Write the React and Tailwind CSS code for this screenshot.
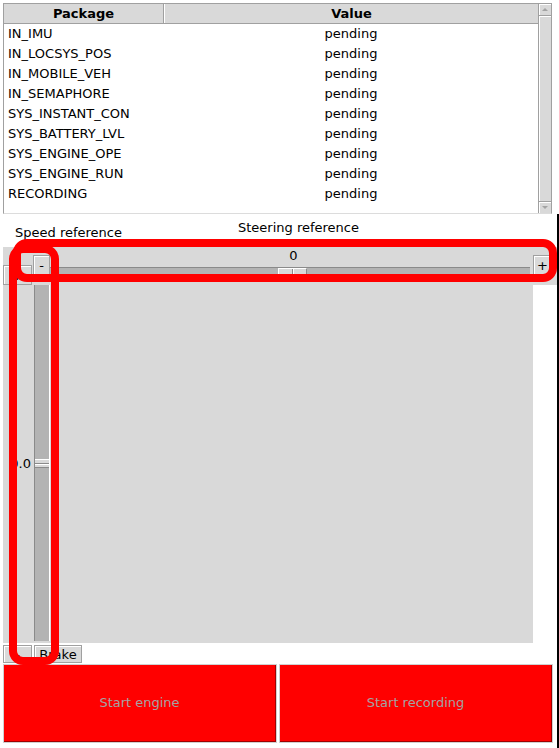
import clsx from 'clsx'

const PACKAGES = [
  'IN_IMU',
  'IN_LOCSYS_POS',
  'IN_MOBILE_VEH',
  'IN_SEMAPHORE',
  'SYS_INSTANT_CON',
  'SYS_BATTERY_LVL',
  'SYS_ENGINE_OPE',
  'SYS_ENGINE_RUN',
  'RECORDING',
]

// Tk-style raised button
function TkButton({ className, children }) {
  return (
    <div
      className={clsx(
        'bg-[#d9d9d9] border border-[#a0a0a0] shadow-[inset_1px_1px_0_#ffffff] flex items-center justify-center leading-none shrink-0',
        className
      )}
    >
      {children}
    </div>
  )
}

function Scrollbar() {
  return (
    <div className="w-[13px] flex flex-col bg-[#d9d9d9] border-l border-[#a0a0a0]">
      <div className="h-[12px] border-b border-[#a0a0a0] shadow-[inset_1px_1px_0_#ffffff] flex items-center justify-center">
        <div className="w-0 h-0 border-x-[3px] border-x-transparent border-b-[3px] border-b-[#a3a3a3]" />
      </div>
      <div className="flex-1 shadow-[inset_1px_1px_0_#ffffff]" />
      <div className="h-[12px] border-t border-[#a0a0a0] shadow-[inset_1px_1px_0_#ffffff] flex items-center justify-center">
        <div className="w-0 h-0 border-x-[3px] border-x-transparent border-t-[3px] border-t-[#a3a3a3]" />
      </div>
    </div>
  )
}

function BigButton({ children }) {
  return (
    <div className="w-[274px] h-[79px] border border-[#d0d0d0] flex">
      <div className="flex-1 bg-[#ff0000] border-r border-b border-[#a00000] flex items-center justify-center text-[#a3a3a3]">
        {children}
      </div>
    </div>
  )
}

export default function App() {
  return (
    <div className="relative w-[559px] h-[748px] bg-white overflow-hidden font-['DejaVu_Sans',sans-serif] text-[13px] text-black">
      {/* Package table */}
      <div className="ml-[3px] mt-[3px] w-[549px] h-[211px] border border-[#a0a0a0] border-b-[#dcdcdc] flex">
        <div className="w-[534px] flex flex-col bg-white">
          <div className="h-[20px] flex bg-[#d9d9d9] border-b border-[#a0a0a0] font-bold">
            <div className="w-[160px] border-r border-[#a0a0a0] text-center leading-[19px]">Package</div>
            <div className="flex-1 border-l border-white text-center leading-[19px]">Value</div>
          </div>
          {PACKAGES.map((p) => (
            <div key={p} className="h-[20px] flex items-center leading-[18px]">
              <span className="w-[160px] pl-[4px]">{p}</span>
              <span className="flex-1 text-center">pending</span>
            </div>
          ))}
        </div>
        <Scrollbar />
      </div>

      {/* Controls */}
      <div className="h-[534px] border-r-2 border-black flex flex-col">
        <div className="h-[33px] flex items-start">
          <div className="w-[238px] pl-[15px] pt-[11px] leading-[15px]">Speed reference</div>
          <div className="pt-[6px] leading-[15px]">Steering reference</div>
        </div>

        <div className="h-[396px] flex">
          <div className="w-[3px]" />
          {/* speed value column */}
          <div className="w-[30px] bg-[#d9d9d9] flex flex-col">
            <div className="h-[18px]" />
            <TkButton className="w-[29px] h-[20px]">+</TkButton>
            <div className="pt-[171px] pr-[2px] text-right leading-[15px]">0.0</div>
          </div>
          {/* speed trough */}
          <div className="w-[17px] bg-[#d9d9d9] flex flex-col">
            <TkButton className="mt-[8px] w-[17px] h-[20px]">-</TkButton>
            <div className="mt-[10px] ml-[1px] w-[16px] h-[356px] bg-[#b3b3b3] border-l border-[#8a8a8a] border-r border-r-white flex flex-col pt-[174px]">
              <div className="w-[14px] h-[9px] bg-[#d9d9d9] border-t border-white border-b border-b-[#8a8a8a] flex flex-col justify-center">
                <div className="h-[1px] bg-[#8a8a8a]" />
                <div className="h-[1px] bg-white" />
              </div>
            </div>
          </div>
          {/* steering + canvas */}
          <div className="w-[483px] bg-[#d9d9d9] flex flex-col">
            <div className="h-[20px] pt-[1px] flex">
              <div className="ml-[229px] w-[29px] text-center leading-[15px]">0</div>
            </div>
            <div className="w-[480px] h-[15px] bg-[#b3b3b3] border-t border-[#8a8a8a] flex">
              <div className="ml-[228px] w-[29px] h-full bg-[#d9d9d9] border-t border-l border-white border-r border-r-[#8a8a8a] flex justify-center">
                <div className="w-[1px] bg-[#8a8a8a]" />
                <div className="w-[1px] bg-white" />
              </div>
            </div>
          </div>
          <div className="w-[24px] flex flex-col">
            <div className="h-[38px] bg-[#d9d9d9] flex flex-col">
              <TkButton className="mt-[8px] w-[19px] h-[20px]">+</TkButton>
            </div>
          </div>
        </div>

        <div className="h-[21px] flex items-start pt-[2px] pl-[3px] gap-[2px]">
          <TkButton className="w-[29px] h-[18px]">-</TkButton>
          <TkButton className="w-[48px] h-[18px]">Brake</TkButton>
        </div>

        <div className="h-[79px] flex gap-[2px] pl-[3px]">
          <BigButton>Start engine</BigButton>
          <BigButton>Start recording</BigButton>
        </div>
      </div>

      {/* red annotation outlines */}
      <div className="absolute left-[13px] top-[239px] w-[544px] h-[43px] border-[8px] border-[#ff0000] rounded-[14px] pointer-events-none" />
      <div className="absolute left-[9px] top-[245px] w-[50px] h-[420px] border-[8px] border-[#ff0000] rounded-[14px] pointer-events-none" />
    </div>
  )
}
